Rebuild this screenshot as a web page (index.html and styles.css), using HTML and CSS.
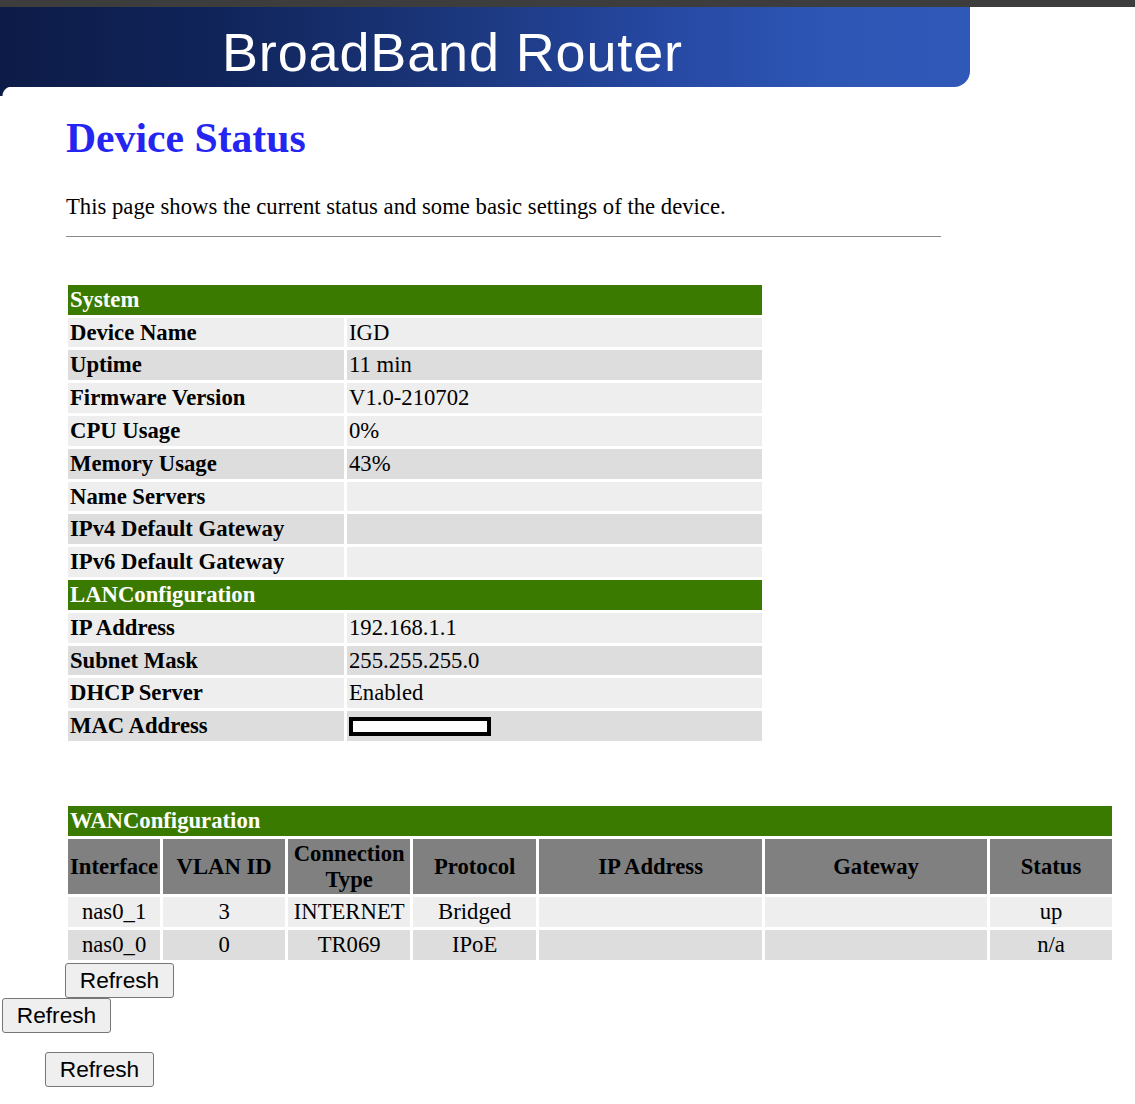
FILE: index.html
```html
<!DOCTYPE html>
<html>
<head>
<meta charset="utf-8">
<title>Device Status</title>
<link rel="stylesheet" href="styles.css">
</head>
<body>
<div class="topbar"></div>
<div class="banner"><span class="banner-title">BroadBand Router</span></div>
<div class="content">
  <h1 class="title">Device Status</h1>
  <p class="intro">This page shows the current status and some basic settings of the device.</p>
  <hr class="rule">
  <table class="info">
    <tr><td colspan="2" class="sect">System</td></tr>
    <tr class="lt"><td class="label">Device Name</td><td>IGD</td></tr>
    <tr class="dk"><td class="label">Uptime</td><td>11 min</td></tr>
    <tr class="lt"><td class="label">Firmware Version</td><td>V1.0-210702</td></tr>
    <tr class="lt"><td class="label">CPU Usage</td><td>0%</td></tr>
    <tr class="dk"><td class="label">Memory Usage</td><td>43%</td></tr>
    <tr class="lt"><td class="label">Name Servers</td><td></td></tr>
    <tr class="dk"><td class="label">IPv4 Default Gateway</td><td></td></tr>
    <tr class="lt"><td class="label">IPv6 Default Gateway</td><td></td></tr>
    <tr><td colspan="2" class="sect">LANConfiguration</td></tr>
    <tr class="lt"><td class="label">IP Address</td><td>192.168.1.1</td></tr>
    <tr class="dk"><td class="label">Subnet Mask</td><td>255.255.255.0</td></tr>
    <tr class="lt"><td class="label">DHCP Server</td><td>Enabled</td></tr>
    <tr class="dk"><td class="label">MAC Address</td><td><span class="redact"></span></td></tr>
  </table>
  <table class="wan">
    <tr><td colspan="7" class="sect">WANConfiguration</td></tr>
    <tr>
      <th class="c-if">Interface</th>
      <th class="c-vl">VLAN ID</th>
      <th class="c-ct">Connection Type</th>
      <th class="c-pr">Protocol</th>
      <th class="c-ip">IP Address</th>
      <th class="c-gw">Gateway</th>
      <th class="c-st">Status</th>
    </tr>
    <tr class="lt"><td>nas0_1</td><td>3</td><td>INTERNET</td><td>Bridged</td><td></td><td></td><td>up</td></tr>
    <tr class="dk"><td>nas0_0</td><td>0</td><td>TR069</td><td>IPoE</td><td></td><td></td><td>n/a</td></tr>
  </table>
  <button class="btn" type="button">Refresh</button>
</div>
<div class="actions">
  <button class="btn btn-b" type="button">Refresh</button>
  <button class="btn btn-c" type="button">Refresh</button>
</div>
</body>
</html>
```
FILE: styles.css
```css
html, body {
  margin: 0;
  padding: 0;
  background: #ffffff;
}
body {
  font-family: "Liberation Serif", "Times New Roman", serif;
  font-size: 22.7px;
  color: #000;
}
.topbar {
  height: 7px;
  background: #3d3d3d;
}
.banner {
  position: relative;
  width: 970px;
  height: 80px;
  box-sizing: border-box;
  padding-top: 18px;
  padding-left: 222px;
  background: linear-gradient(to right, #0d1b47 0%, #10245a 22%, #1a3579 45%, #2648a2 68%, #2d56b5 85%, #2f58b8 100%);
  border-bottom-right-radius: 16px;
}
.banner::after {
  content: "";
  position: absolute;
  left: 0;
  top: 100%;
  width: 12px;
  height: 9px;
  background: radial-gradient(circle at 100% 100%, #ffffff 0 9px, #0d1b47 10px);
}
.banner-title {
  display: block;
  font-family: "Liberation Sans", Arial, sans-serif;
  font-size: 54px;
  line-height: 54px;
  letter-spacing: 0.85px;
  color: #ffffff;
}
.content {
  padding-left: 65px;
}
.title {
  margin: 27px 0 0 1px;
  font-size: 41.7px;
  line-height: 48px;
  font-weight: bold;
  color: #2525f2;
}
.intro {
  margin: 32px 0 0 1px;
  line-height: 25.8px;
}
.rule {
  margin: 16px 0 0 1px;
  width: 875px;
  height: 0;
  border: 0;
  border-top: 1px solid #8a8a8a;
}
table {
  border-collapse: separate;
  border-spacing: 3px;
}
td, th {
  padding: 2px;
  line-height: 25.8px;
}
.info {
  width: 700px;
  margin-top: 45px;
}
.info td {
  text-align: left;
}
.info .label {
  width: 272px;
  font-weight: bold;
}
.sect {
  background: #3a7a00;
  color: #ffffff;
  font-weight: bold;
  text-align: left;
}
.lt td {
  background: #eeeeee;
}
.dk td {
  background: #dddddd;
}
.redact {
  display: inline-block;
  vertical-align: middle;
  width: 134px;
  height: 11px;
  border: 4px solid #000;
  background: #fff;
  margin-top: -3px;
}
.wan {
  width: 1050px;
  margin-top: 59px;
}
.wan th {
  background: #808080;
  font-weight: bold;
  text-align: center;
  vertical-align: middle;
}
.wan td {
  text-align: center;
}
.wan td.sect {
  text-align: left;
}
.c-if { width: 88px; }
.c-vl { width: 118px; }
.c-ct { width: 118px; }
.c-pr { width: 119px; }
.c-ip { width: 219px; }
.c-gw { width: 218px; }
.c-st { width: 118px; }
.btn {
  display: block;
  width: 109px;
  height: 35px;
  padding: 0;
  margin: 0;
  background: #efefef;
  border: 1px solid #767676;
  border-radius: 3px;
  font-family: "Liberation Sans", Arial, sans-serif;
  font-size: 22.7px;
  color: #000;
}
.actions {
  display: flex;
  flex-direction: column;
  align-items: flex-start;
}
.btn-b {
  margin-left: 2px;
}
.btn-c {
  margin-left: 45px;
  margin-top: 19px;
}
```
